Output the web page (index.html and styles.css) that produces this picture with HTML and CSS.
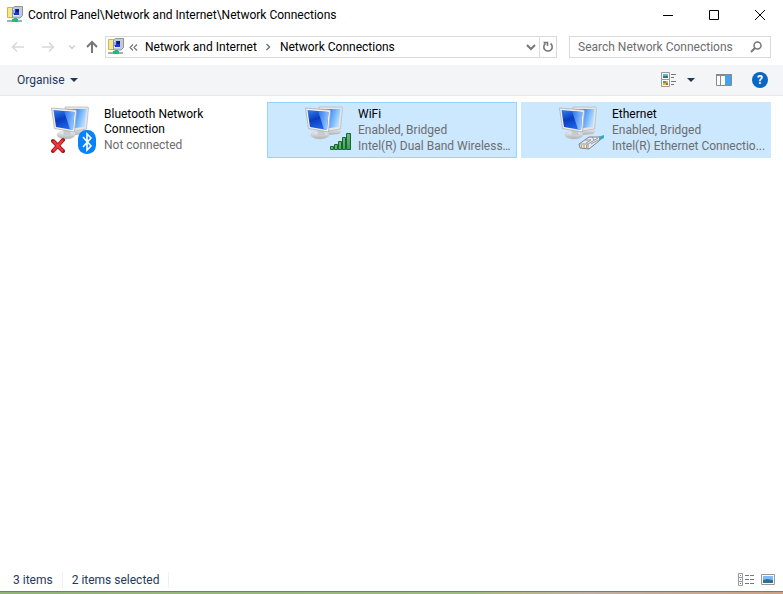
FILE: index.html
```html
<!DOCTYPE html>
<html lang="en-GB">
<head>
<meta charset="utf-8">
<title>Network Connections</title>
<link rel="stylesheet" href="styles.css">
</head>
<body>
<svg class="defs" aria-hidden="true">
  <defs>
    <linearGradient id="screen" x1="0" y1="0" x2="1" y2="0.3">
      <stop offset="0.3" stop-color="#2270ee"/><stop offset="0.6" stop-color="#5aa4fa"/><stop offset="1" stop-color="#b4dcff"/>
    </linearGradient>
    <linearGradient id="screenDark" x1="0.2" y1="0" x2="0.6" y2="1">
      <stop offset="0" stop-color="#2f78e6"/><stop offset="0.45" stop-color="#0a3cc0"/><stop offset="1" stop-color="#1f6cf0"/>
    </linearGradient>
    <linearGradient id="glare" x1="0" y1="0" x2="1" y2="0.3">
      <stop offset="0" stop-color="#2a7cf4"/><stop offset="1" stop-color="#a8d4ff"/>
    </linearGradient>
    <linearGradient id="metal" x1="0" y1="0" x2="0" y2="1">
      <stop offset="0" stop-color="#f4f4f4"/><stop offset="1" stop-color="#adb1b4"/>
    </linearGradient>
    <linearGradient id="bars" x1="0" y1="0" x2="1" y2="1">
      <stop offset="0" stop-color="#9ad8a4"/><stop offset="1" stop-color="#3a9653"/>
    </linearGradient>
    <symbol id="monitors" viewBox="0 0 48 50">
      <path d="M23 24l10-2 4 3-3 3-10 1z" fill="url(#metal)"/>
      <path d="M14 1L37 1l0.500 1-2 21-12 2-9-3z" fill="#e4e6e7" stroke="#b2b6b9" stroke-width="0.7"/>
      <path d="M16 3l19.500 0-2 18-9 1-8-2z" fill="url(#screen)"/>
      <ellipse cx="15" cy="29" rx="9" ry="4" fill="url(#metal)" stroke="#bfc2c4" stroke-width="0.5"/>
      <path d="M12 23l7 1 1 5-7 0z" fill="#c8cbcd"/>
      <path d="M0.500 2l24.500 2 0.500 1-2 21L3.500 22.500z" fill="#f1f2f3" stroke="#a9adb0" stroke-width="0.8"/>
      <path d="M2.500 4l21 2-1.500 18L5 21z" fill="url(#screenDark)"/>
      <path d="M13 5l10.500 1-1.500 18-3-0.500z" fill="url(#glare)" opacity="0.85"/>
    </symbol>
    <symbol id="network" viewBox="0 0 16 18">
      <path d="M0.500 1.500h6v10h-6z" fill="#f7e68a" stroke="#cdb450"/>
      <path d="M5.500 2l2-1.500h8v9l-2.500 2.500H5.500z" fill="#c3c9d6" stroke="#8e95a5"/>
      <path d="M6 3h6v7H6z" fill="#dfe8f6"/>
      <path d="M6 6l2-3h4v6H7z" fill="#1b36c8"/>
      <path d="M9 3h3v3H9z" fill="#0a1690"/>
      <path d="M6 4h2v3H6z" fill="#8ab4f2"/>
      <path d="M7 12h3v2H7z" fill="#4a9c7c"/>
      <path d="M0 14h15v2H0z" fill="#9bb5ad"/>
      <path d="M5 13h6v3H5z" fill="#08c875"/>
    </symbol>
  </defs>
</svg>

<div class="window">
  <header class="titlebar">
    <svg class="app-icon" width="16" height="18"><use href="#network"/></svg>
    <h1 class="title">Control Panel\Network and Internet\Network Connections</h1>
    <button class="caption" aria-label="Minimise"><svg width="12" height="12"><path d="M1 6.500h10" stroke="#000"/></svg></button>
    <button class="caption" aria-label="Maximise"><svg width="12" height="12"><path d="M1.500 1.500h9v9h-9z" fill="none" stroke="#000"/></svg></button>
    <button class="caption" aria-label="Close"><svg width="12" height="12"><path d="M1 1l10 10M11 1L1 11" stroke="#000"/></svg></button>
  </header>

  <nav class="navbar" aria-label="Location">
    <button class="nav back" aria-label="Back"><svg width="14" height="12"><path d="M13 6H2M6 1.500L1.500 6 6 10.500" fill="none" stroke="#d8d8d8" stroke-width="1.500"/></svg></button>
    <button class="nav forward" aria-label="Forward"><svg width="14" height="12"><path d="M1 6h11M8 1.500L12.500 6 8 10.500" fill="none" stroke="#d8d8d8" stroke-width="1.500"/></svg></button>
    <button class="nav recent" aria-label="Recent locations"><svg width="8" height="6"><path d="M1 1.500l3 3 3-3" fill="none" stroke="#d0d0d0" stroke-width="1.500"/></svg></button>
    <button class="nav up" aria-label="Up"><svg width="14" height="14"><path d="M7 13V2M2 7l5-5 5 5" fill="none" stroke="#777" stroke-width="2"/></svg></button>
    <div class="address">
      <svg class="address-icon" width="16" height="18"><use href="#network"/></svg>
      <button class="crumb-more" aria-label="More locations"><svg width="9" height="7"><path d="M4 0.500l-3 3 3 3M8 0.500l-3 3 3 3" fill="none" stroke="#777" stroke-width="1.200"/></svg></button>
      <a class="crumb" href="#">Network and Internet</a>
      <svg class="crumb-sep" width="5" height="8"><path d="M0.500 1l3 3-3 3" fill="none" stroke="#777" stroke-width="1.500"/></svg>
      <a class="crumb" href="#">Network Connections</a>
      <button class="address-drop" aria-label="Previous locations"><svg width="10" height="7"><path d="M1 1l4 4 4-4" fill="none" stroke="#777" stroke-width="2"/></svg></button>
      <button class="refresh" aria-label="Refresh"><svg width="12" height="12"><path d="M8.500 2.500a4.200 4.200 0 1 1-5 0M1.500 1.500h4V5" fill="none" stroke="#777" stroke-width="1.600"/></svg></button>
    </div>
    <label class="search">
      <input type="search" placeholder="Search Network Connections" aria-label="Search Network Connections">
      <svg width="12" height="12"><circle cx="7.500" cy="4.500" r="3.500" fill="none" stroke="#777" stroke-width="1.500"/><path d="M5 7l-4 4" stroke="#777" stroke-width="2"/></svg>
    </label>
  </nav>

  <div class="toolbar">
    <button class="organise">Organise <svg width="8" height="4"><path d="M0 0h8L4 4z" fill="#1e395b"/></svg></button>
    <button class="tool view" aria-label="Change your view"><svg width="16" height="16"><path d="M0.500 0.500h8v7h-8zM0.500 7.500h8v7h-8z" fill="#fff" stroke="#999"/><path d="M2 2h5v2H2z" fill="#69aaf0"/><path d="M2 4h5v2H2z" fill="#35785f"/><path d="M2 9h5v4H2z" fill="#e5b348"/><path d="M2 9h3v2H2z" fill="#5a9c45"/><path d="M5 11h2v2H5z" fill="#d4503c"/><path d="M10 2.500h5M10 5.500h3M10 9.500h5M10 12.500h3" stroke="#777"/></svg></button>
    <button class="tool view-drop" aria-label="More options"><svg width="8" height="4"><path d="M0 0h8L4 4z" fill="#1e395b"/></svg></button>
    <button class="tool pane" aria-label="Preview pane"><svg width="16" height="12"><path d="M0.500 0.500h15v11H0.500zM4.500 2v9" fill="#fff" stroke="#8a8a8a"/><path d="M0 0h16v2H0z" fill="#8a8a8a"/><path d="M9 1h6v10H9z" fill="#43a2ef"/></svg></button>
    <button class="tool help" aria-label="Help">?</button>
  </div>

  <main class="items" role="listbox" aria-label="Connections" aria-multiselectable="true">
    <article class="tile" role="option" aria-selected="false">
      <svg class="tile-icon" width="48" height="50"><use href="#monitors"/>
        <path d="M2 35l10 10M12 34L2 45" stroke="#a3161b" stroke-width="4" stroke-linecap="round"/><path d="M2 35l10 10M12 34L2 45" stroke="#ee3a3e" stroke-width="2.200"/>
        <rect x="27" y="24" width="18" height="24" rx="8.500" fill="#0782f8"/><path d="M32 31l8 9-4 4V28l4 4-8 9" fill="none" stroke="#fff" stroke-width="1.600"/></svg>
      <div class="tile-text"><h2 class="name">Bluetooth Network Connection</h2><p class="detail">Not connected</p></div>
    </article>
    <article class="tile selected focused" role="option" aria-selected="true">
      <svg class="tile-icon" width="48" height="50"><use href="#monitors"/>
        <path d="M25.500 40.500h3v3h-3zM29.500 38.500h3v5h-3zM33.500 35.500h3v8h-3zM37.500 31.500h3v12h-3zM41.500 27.500h4v16h-4z" fill="url(#bars)" stroke="#176531"/></svg>
      <div class="tile-text"><h2 class="name">WiFi</h2><p class="detail">Enabled, Bridged</p><p class="detail">Intel(R) Dual Band Wireless...</p></div>
    </article>
    <article class="tile selected" role="option" aria-selected="true">
      <svg class="tile-icon" width="48" height="50"><use href="#monitors"/>
        <path d="M36 32l9-3v3l-7 4z" fill="#35aacb"/>
        <path d="M20 38l10-7 11 0-1 4-10 8-9-1z" fill="#e6e9ed" stroke="#7d8490"/>
        <path d="M20 38h9l10-6M29 38v5M26 34h6l-5 3M32 38l7-4M33 31l2 3" fill="none" stroke="#8c929b" stroke-width="0.9"/>
        <path d="M22.500 39v3M25 39v3M27.500 39v3" stroke="#c2a93c"/></svg>
      <div class="tile-text"><h2 class="name">Ethernet</h2><p class="detail">Enabled, Bridged</p><p class="detail">Intel(R) Ethernet Connectio...</p></div>
    </article>
  </main>

  <footer class="status">
    <span class="status-cell">3 items</span>
    <span class="status-cell">2 items selected</span>
    <button class="mode details" aria-label="Details view"><svg width="17" height="13"><path d="M0.500 0.500h4v4h-4zM0.500 4.500h4v4h-4zM0.500 8.500h4v4h-4z" fill="#fff" stroke="#999"/><path d="M2 2h1v1H2z" fill="#58a"/><path d="M2 6h1v1H2z" fill="#48c"/><path d="M2 10h1v1H2z" fill="#c33"/><path d="M7 2.500h4M12 2.500h4M7 6.500h4M12 6.500h4M7 10.500h4M12 10.500h4" stroke="#777"/></svg></button>
    <button class="mode" aria-label="Large icons view"><svg width="14" height="11"><path d="M0.500 0.500h13v10H0.500z" fill="#fff" stroke="#999"/><path d="M2 2h10v4H2z" fill="#7fbcf7"/><path d="M2 6l4-1 6 1v3H2z" fill="#2f6f96"/></svg></button>
  </footer>
</div>
<div class="desktop"></div>
</body>
</html>
```
FILE: styles.css
```css
* { box-sizing: border-box; }
body {
  margin: 0;
  min-height: 100vh;
  display: flex;
  flex-direction: column;
  background: #fff;
  color: #000;
  font: 12px/16px Roboto, "Open Sans", sans-serif;
}
.defs { position: absolute; width: 0; height: 0; }
svg { display: block; flex: none; }
button {
  display: flex;
  align-items: center;
  justify-content: center;
  padding: 0;
  border: 0;
  background: none;
  color: inherit;
  font: inherit;
}
h1, h2, p { margin: 0; font: inherit; }
.window { flex: 1; display: flex; flex-direction: column; border-bottom: 1px solid #e3503c; }

.titlebar { display: flex; align-items: center; height: 30px; padding-left: 7px; }
.title { flex: 1; margin-left: 5px; white-space: nowrap; }
.caption { width: 46px; height: 28px; }

.navbar { display: flex; align-items: center; height: 35px; padding: 0 12px 1px 11px; }
.nav { height: 22px; }
.forward { margin-left: 16px; }
.recent { margin-left: 13px; }
.up { margin: 0 6px 0 9px; }
.address {
  flex: 1;
  display: flex;
  align-items: center;
  height: 22px;
  padding-left: 2px;
  border: 1px solid #d9d9d9;
}
.crumb-more { margin: 0 7px 0 5px; }
.crumb { color: inherit; text-decoration: none; white-space: nowrap; }
.crumb-sep { margin: 0 9px; }
.address-drop { width: 16px; height: 20px; margin-left: auto; }
.refresh { width: 17px; height: 20px; border-left: 1px solid #d9d9d9; }
.search {
  display: flex;
  align-items: center;
  width: 202px;
  height: 22px;
  margin-left: 12px;
  padding: 0 8px;
  border: 1px solid #d9d9d9;
}
.search input {
  flex: 1;
  min-width: 0;
  padding: 0;
  border: 0;
  outline: 0;
  background: none;
  font: inherit;
}
.search input::placeholder { color: #6d6d6d; opacity: 1; }

.toolbar {
  display: flex;
  align-items: center;
  height: 31px;
  padding: 0 15px 0 17px;
  border-bottom: 1px solid #e7e8ea;
  background: #f4f5f7;
  color: #1e395b;
}
.organise { gap: 5px; margin-right: auto; }
.view-drop { margin: 0 21px 0 10px; }
.pane { margin-right: 20px; }
.help {
  width: 16px;
  height: 16px;
  border-radius: 50%;
  background: #0b66c3;
  color: #fff;
  font-weight: 700;
}

.items {
  flex: 1;
  display: grid;
  grid-template-columns: repeat(auto-fill, 250px);
  align-content: start;
  gap: 4px;
  padding: 6px 12px 6px 13px;
}
.tile { display: flex; min-height: 56px; padding: 3px 4px 1px 37px; border: 1px solid transparent; }
.tile-text { flex: 1; min-width: 0; margin-left: 5px; padding-top: 1px; }
.name { line-height: 15px; }
.detail { overflow: hidden; color: #6d6d6d; text-overflow: ellipsis; white-space: nowrap; }
.selected { border-color: #cce8ff; background: #cce8ff; }
.focused { border-color: #99d1ff; }

.status { display: flex; align-items: center; height: 23px; padding: 0 8px 0 13px; color: #1e395b; }
.status-cell { padding-right: 9px; margin-right: 9px; border-right: 1px solid #f0f0f0; }
.details { margin-left: auto; margin-right: 6px; }
.desktop { height: 2px; background: linear-gradient(90deg, #92b378, #9dba80 60%, #b3b783 65%, #bfb0a2 75%, #cda184); }
```
